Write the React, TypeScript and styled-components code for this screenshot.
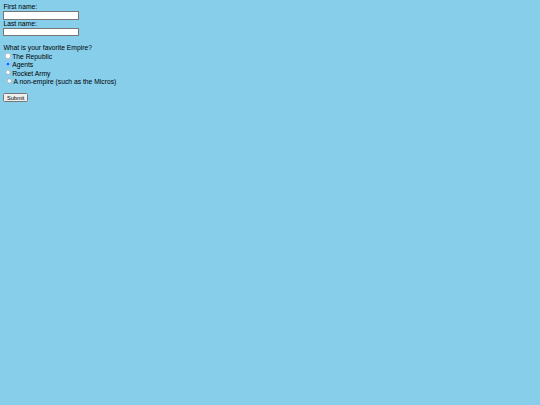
import * as React from 'react';
import styled, {createGlobalStyle} from 'styled-components';

const GlobalStyle = createGlobalStyle`
	body {
		margin: 0;
		background: #87ceeb;
	}
`;

// the form is laid out at desktop size and scaled down as a whole
const Page = styled.div`
	zoom: 0.421875;
	padding: 8px;
	font-family: "Liberation Sans", Arial, sans-serif;
	font-size: 16px;
	line-height: 18.2px;
	color: #000;
`;

const Form = styled.form`
	margin: 0;
`;

const TextField = styled.input.attrs({type: 'text'})`
	font-family: "Liberation Sans", Arial, sans-serif;
	font-size: 13.33px;
`;

const Choice = styled.input.attrs({type: 'radio'})<{$indent?: boolean}>`
	margin-left: ${({$indent}) => ($indent ? '8px' : '5px')};
`;

const SubmitButton = styled.input.attrs({type: 'submit'})`
	font-family: "Liberation Sans", Arial, sans-serif;
	font-size: 13.33px;
`;

const empires = [
	{value: 'republic', label: 'The Republic'},
	{value: 'agents', label: 'Agents'},
	{value: 'rocket', label: 'Rocket Army'},
	{value: 'none', label: 'A non-empire (such as the Micros)', indent: true},
];

export default function App() {
	return (
		<Page>
			<GlobalStyle />
			<Form onSubmit={(e) => e.preventDefault()}>
				First name:<br />
				<TextField name="firstname" /><br />
				Last name:<br />
				<TextField name="lastname" /><br />
				<br />
				What is your favorite Empire?<br />
				{empires.map((empire) => (
					<React.Fragment key={empire.value}>
						<Choice
							name="empire"
							value={empire.value}
							defaultChecked={empire.value === 'agents'}
							$indent={empire.indent}
						/>
						{empire.label}<br />
					</React.Fragment>
				))}
				<br />
				<SubmitButton value="Submit" />
			</Form>
		</Page>
	);
}
